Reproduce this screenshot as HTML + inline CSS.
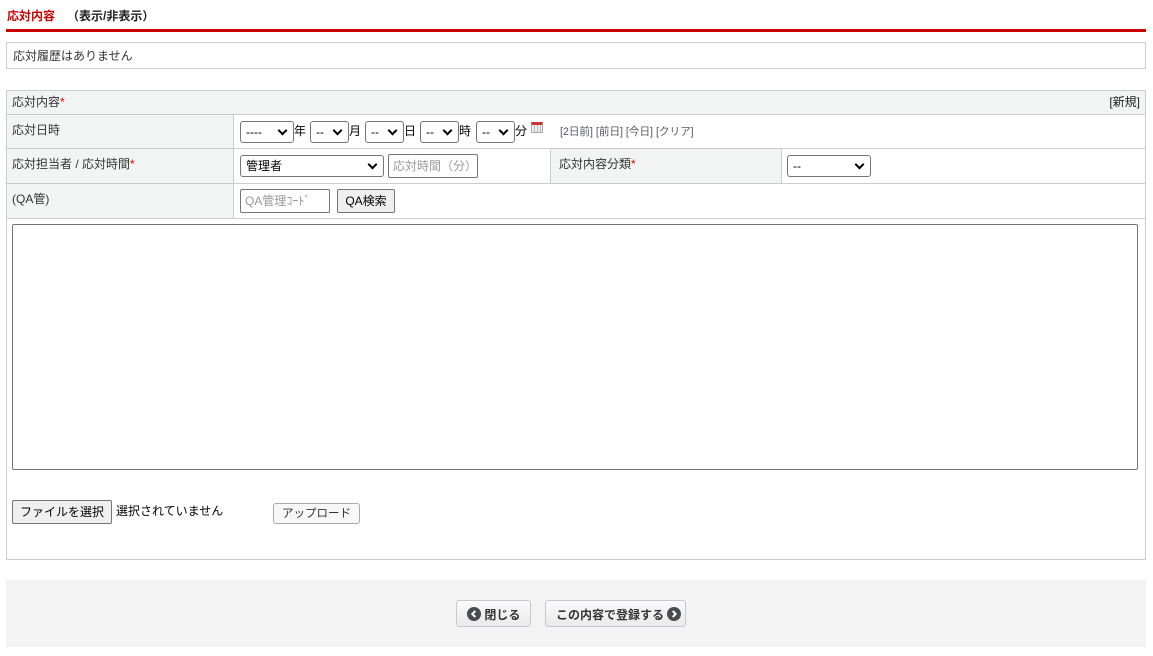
<!DOCTYPE html>
<html><head><meta charset="utf-8"><style>
*{box-sizing:border-box}
body{margin:0;width:1153px;height:656px;background:#fff;font-family:"Liberation Sans","Noto Sans CJK JP",sans-serif;font-size:12px;color:#333;position:relative;overflow:hidden}
.a{position:absolute;line-height:14px}
.sel{position:absolute;height:22px;border:1px solid #767676;border-radius:3px;background:#fff;font-size:12px;padding:3px 5px;color:#000;line-height:14px}
.sel:after{content:"";position:absolute;right:7px;top:5px;width:5px;height:5px;border-right:2px solid #000;border-bottom:2px solid #000;transform:rotate(45deg)}
.lbl{position:absolute;font-size:12px;color:#000;line-height:14px}
.inp{position:absolute;height:24px;border:1px solid #767676;border-radius:2px;background:#fff;color:#999;padding:4px 4px;font-size:12px;line-height:14px}
.btn{position:absolute;border:1px solid #767676;border-radius:2px;background:#efefef;color:#000;font-size:12px;text-align:center;line-height:14px}
.star{color:#e00}
.bb{position:absolute;height:27px;border:1px solid #c8c8d0;border-radius:3px;background:linear-gradient(#fafafa,#eaeaea);font-weight:bold;font-size:12px;color:#333;padding-top:6px;line-height:14px;white-space:nowrap}
.ci{display:inline-block;vertical-align:-2px}
</style></head><body>
<div class="a" style="left:7px;top:9px;font-weight:bold;color:#c00">応対内容</div>
<div class="a" style="left:67px;top:9px;font-weight:bold;color:#222">（表示/非表示）</div>
<div class="a" style="left:6px;top:29px;width:1140px;height:3px;background:#c00"></div>
<div class="a" style="left:6px;top:42px;width:1140px;height:27px;border:1px solid #ccc;padding:6px 6px">応対履歴はありません</div>

<div class="a" style="left:6px;top:90px;width:1140px;height:470px;border:1px solid #ccc"></div>
<div class="a" style="left:7px;top:91px;width:1138px;height:24px;background:#f2f3f3;border-bottom:1px solid #ccc;padding:4px 5px">応対内容<span class="star">*</span><span style="float:right;color:#222">[新規]</span></div>
<div class="a" style="left:7px;top:115px;width:227px;height:103px;background:#f2f3f3;border-right:1px solid #ccc"></div>
<div class="a" style="left:550px;top:149px;width:232px;height:35px;background:#f2f3f3;border-left:1px solid #ccc;border-right:1px solid #ccc"></div>
<div class="a" style="left:7px;top:148px;width:1138px;height:1px;background:#ccc"></div>
<div class="a" style="left:7px;top:183px;width:1138px;height:1px;background:#ccc"></div>
<div class="a" style="left:7px;top:218px;width:1138px;height:1px;background:#ccc"></div>
<div class="a" style="left:12px;top:123px">応対日時</div>
<div class="a" style="left:12px;top:157px">応対担当者 / 応対時間<span class="star">*</span></div>
<div class="a" style="left:12px;top:192px">(QA管)</div>
<div class="a" style="left:559px;top:157px">応対内容分類<span class="star">*</span></div>

<div class="sel" style="left:240px;top:121px;width:54px">----</div><div class="lbl" style="left:294px;top:124px">年</div>
<div class="sel" style="left:310px;top:121px;width:39px">--</div><div class="lbl" style="left:349px;top:124px">月</div>
<div class="sel" style="left:365px;top:121px;width:39px">--</div><div class="lbl" style="left:404px;top:124px">日</div>
<div class="sel" style="left:420px;top:121px;width:39px">--</div><div class="lbl" style="left:459px;top:124px">時</div>
<div class="sel" style="left:476px;top:121px;width:39px">--</div><div class="lbl" style="left:515px;top:124px">分</div>
<div class="a" style="left:531px;top:122px;width:12px;height:11px;border:1px solid #aaa;border-top:3px solid #c33;background:repeating-linear-gradient(90deg,#eee 0 2px,#bbb 2px 3px)"></div>
<div class="a" style="left:560px;top:125px;font-size:10.6px;color:#556;white-space:nowrap">[2日前] [前日] [今日] [クリア]</div>

<div class="sel" style="left:240px;top:155px;width:144px">管理者</div>
<div class="inp" style="left:388px;top:154px;width:90px">応対時間（分）</div>
<div class="sel" style="left:787px;top:155px;width:84px">--</div>
<div class="inp" style="left:240px;top:189px;width:90px">QA管理ｺｰﾄﾞ</div>
<div class="btn" style="left:337px;top:189px;width:58px;height:24px;padding-top:4px">QA検索</div>

<div class="a" style="left:12px;top:224px;width:1126px;height:246px;border:1px solid #767676;border-radius:2px"></div>
<div class="btn" style="left:12px;top:500px;width:100px;height:24px;padding-top:4px">ファイルを選択</div>
<div class="a" style="left:116px;top:504px;color:#000">選択されていません</div>
<div class="btn" style="left:273px;top:503px;width:87px;height:21px;padding-top:3px;border-color:#aaa;background:#f7f7f7;border-radius:3px;color:#333;font-size:11.5px">アップロード</div>

<div class="a" style="left:6px;top:580px;width:1140px;height:67px;background:#f3f3f3"></div>
<div class="bb" style="left:456px;top:600px;width:75px;padding-left:10px"><svg class="ci" width="14" height="14" viewBox="0 0 14 14"><circle cx="7" cy="7" r="7" fill="#4a4a52"/><path d="M8.3 4 L5.3 7 L8.3 10" stroke="#fff" stroke-width="2" fill="none"/></svg> 閉じる</div>
<div class="bb" style="left:545px;top:600px;width:141px;padding-left:10px">この内容で登録する <svg class="ci" width="14" height="14" viewBox="0 0 14 14"><circle cx="7" cy="7" r="7" fill="#4a4a52"/><path d="M5.7 4 L8.7 7 L5.7 10" stroke="#fff" stroke-width="2" fill="none"/></svg></div>
</body></html>
